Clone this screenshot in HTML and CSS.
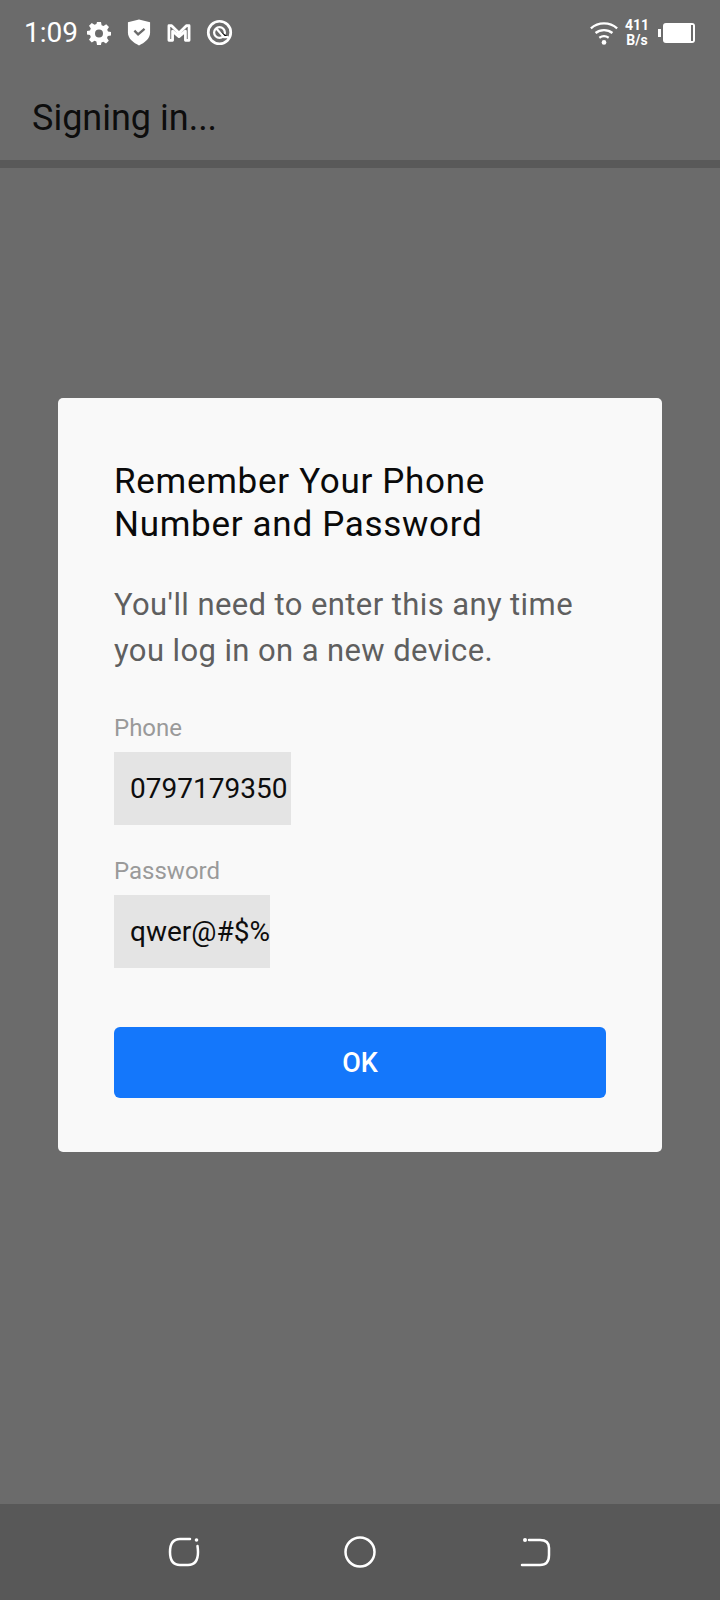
FILE: index.html
```html
<!DOCTYPE html>
<html lang="en">
<head>
    <meta charset="UTF-8">
    <meta name="viewport" content="width=device-width, initial-scale=1.0">
    <title>Signing in...</title>
    <link rel="stylesheet" href="styles.css">
</head>
<body>
    <div id="screen">
        <div class="status-bar">
            <div class="status-left">
                <span class="clock">1:09</span>
                <svg class="icon-gear" width="24" height="24" viewBox="0 0 24 24"><path fill="#fff" fill-rule="evenodd" d="M10 1h4l.6 3.2 1.900.8L19.200 3.200l2.800 2.800-1.800 2.700.8 1.900L24 11v3.500l-3.200.6-.8 1.900 1.800 2.700-2.800 2.800-2.700-1.800-1.900.8L14 24h-4l-.6-3.500-1.900-.8-2.700 1.800L2 18.700l1.800-2.700-.8-1.900L0 13.500V10l3-.6.800-1.900L2 4.800 4.800 2l2.700 1.800 1.900-.8zM12 8.500a4 4 0 1 0 0 8 4 4 0 0 0 0-8z"/></svg>
                <svg class="icon-shield" width="24" height="27" viewBox="0 0 26 28"><path fill="#fff" d="M1 3 13 0l12 3v11c0 7-6 11-12 14C7 25 1 21 1 14z"/><path fill="none" stroke="#6b6b6b" stroke-width="2.500" d="M8 12l4 4 7-6"/></svg>
                <svg class="icon-mail" width="26" height="22" viewBox="0 0 28 24"><path fill="none" stroke="#fff" stroke-width="3" stroke-linejoin="round" d="M3 20V4h3l8 8 8-8h3v16h-4V10l-7 6-7-6v10z"/></svg>
                <svg class="icon-at" width="27" height="27" viewBox="0 0 30 30"><circle cx="15" cy="15" r="12.500" fill="none" stroke="#fff" stroke-width="3"/><circle cx="15" cy="15" r="6" fill="none" stroke="#fff" stroke-width="2.500"/><path stroke="#fff" stroke-width="2.500" d="M11 10l9 10h5"/></svg>
            </div>
            <div class="status-right">
                <svg width="30" height="26" viewBox="0 0 32 26"><g fill="none" stroke="#fff" stroke-width="2.500"><path d="M2 8c8-7 20-7 28 0"/><path d="M7 13c5-4 13-4 18 0"/><path d="M11 18c3-2 7-2 10 0"/></g><circle cx="16" cy="23" r="2.500" fill="#fff"/></svg>
                <div class="net-speed"><span>411</span><span>B/s</span></div>
                <svg width="38" height="22" viewBox="0 0 38 22"><rect x="0" y="7" width="3" height="8" fill="#fff"/><rect x="5" y="1" width="32" height="20" rx="3" fill="#fff"/><rect x="33" y="3" width="2" height="16" fill="#6b6b6b"/></svg>
            </div>
        </div>
        <div class="app-bar">Signing in...</div>
        <div class="content">
            <div class="card">
                <h1 class="card-title">Remember Your Phone Number and Password</h1>
                <p class="card-text">You'll need to enter this any time you log in on a new device.</p>
                <div class="field-label">Phone</div>
                <div class="field-value phone">0797179350</div>
                <div class="field-label second">Password</div>
                <div class="field-value">qwer@#$%</div>
                <button class="ok-btn">OK</button>
            </div>
        </div>
        <div class="nav-bar">
            <svg width="32" height="32" viewBox="0 0 32 32"><path fill="none" stroke="#fff" stroke-width="2.500" stroke-linecap="round" d="M22 3H12C5 3 2 7 2 16s3 13 10 13h8c7 0 10-4 10-13 0-2-.2-4-.5-6"/><circle cx="28.500" cy="4" r="1.800" fill="#fff"/></svg>
            <svg width="32" height="32" viewBox="0 0 32 32"><circle cx="16" cy="16" r="14.500" fill="none" stroke="#fff" stroke-width="2.500"/></svg>
            <svg width="32" height="32" viewBox="0 0 32 32"><path fill="none" stroke="#fff" stroke-width="2.500" stroke-linecap="round" d="M9 4h11c6 0 9 3 9 8v7c0 7-3 10-9 10H2"/><circle cx="5" cy="4" r="2" fill="#fff"/></svg>
        </div>
    </div>
</body>
</html>
```

FILE: styles.css
```css
body {
    margin: 0;
    font-family: Roboto, "Liberation Sans", sans-serif;
    background: #6b6b6b;
}
#screen {
    width: 720px;
    height: 1600px;
    display: flex;
    flex-direction: column;
    overflow: hidden;
}
.status-bar {
    height: 65px;
    flex-shrink: 0;
    display: flex;
    justify-content: space-between;
    align-items: center;
    padding: 0 24px;
    color: #ffffff;
}
.status-left, .status-right {
    display: flex;
    align-items: center;
}
.clock {
    font-size: 28px;
    margin-right: 9px;
}
.icon-shield { margin-left: 16px; }
.icon-mail { margin-left: 15px; }
.icon-at { margin-left: 14px; }
.net-speed {
    display: flex;
    flex-direction: column;
    align-items: center;
    font-size: 14px;
    font-weight: 700;
    line-height: 15px;
    margin: 0 9px 0 6px;
}
.app-bar {
    height: 103px;
    flex-shrink: 0;
    box-sizing: border-box;
    padding: 10px 32px 0;
    display: flex;
    align-items: center;
    font-size: 36px;
    color: #0d0d0d;
    border-bottom: 8px solid #595959;
}
.content {
    flex: 1;
    padding: 230px 58px 0;
}
.card {
    background: #f9f9f9;
    border-radius: 5px;
    padding: 62px 56px 52px;
    height: 754px;
    box-sizing: border-box;
}
.card-title {
    margin: 0;
    font-size: 35px;
    font-weight: 400;
    line-height: 43px;
    letter-spacing: 0.7px;
    color: #0a0a0a;
}
.card-text {
    margin: 36px 0 0;
    font-size: 31px;
    line-height: 46px;
    letter-spacing: 0.4px;
    color: #5f5f5f;
}
.field-label {
    margin-top: 39px;
    font-size: 24px;
    line-height: 30px;
    color: #9a9a9a;
}
.field-label.second {
    margin-top: 31px;
}
.field-value {
    display: table;
    margin-top: 9px;
    height: 73px;
    line-height: 73px;
    padding: 0 0 0 16px;
    background: #e4e4e4;
    font-size: 28px;
    color: #0d0d0d;
}
.field-value.phone {
    padding-right: 4px;
}
.ok-btn {
    display: block;
    width: 492px;
    height: 71px;
    margin-top: 59px;
    border: none;
    border-radius: 6px;
    background: #1477fb;
    color: #ffffff;
    font-family: inherit;
    font-size: 27px;
    font-weight: 500;
}
.nav-bar {
    height: 96px;
    flex-shrink: 0;
    background: #585858;
    display: flex;
    justify-content: center;
    align-items: center;
    gap: 144px;
}
```
